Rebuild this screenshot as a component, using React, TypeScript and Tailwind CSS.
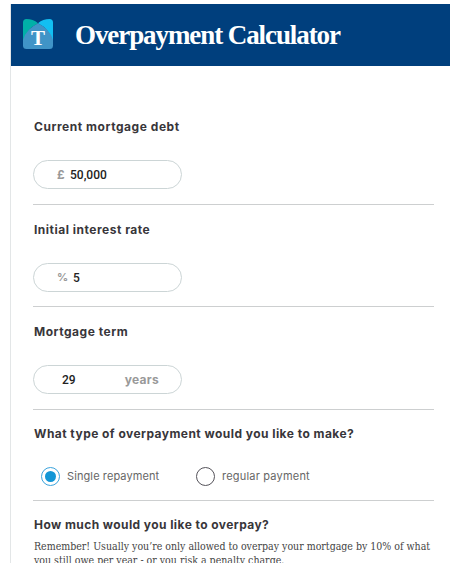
import React from "react";

function Heading({ children, className = "" }: { children: React.ReactNode; className?: string }) {
  return (
    <h2 className={`ml-px whitespace-nowrap font-['Inter',sans-serif] text-[12px] font-bold leading-[18px] text-[#38363a] ${className}`}>
      {children}
    </h2>
  );
}

function Pill({ children }: { children: React.ReactNode }) {
  return (
    <div className="flex h-[29px] w-[149px] items-center rounded-full border border-[#ccd5d6] font-['Roboto',sans-serif] text-[12px] font-medium leading-none text-[#222]">
      {children}
    </div>
  );
}

function Logo() {
  return (
    <svg width="30" height="30" viewBox="0 0 30 30" className="mb-[3px] shrink-0">
      <path d="M0 3.5Q0 0 3.5 0Q10 0 15 4.2Q3 10 0 24Z" fill="#00b0a8" />
      <path d="M30 3.5Q30 0 26.5 0Q20 0 15 4.2Q27 10 30 24Z" fill="#12bff2" />
      <path d="M15 4.2Q27 10 30 21V26.5Q30 30 26.5 30H3.5Q0 30 0 26.5V21Q3 10 15 4.2Z" fill="#4094c7" />
      <text x="15" y="26" textAnchor="middle" fontFamily="Liberation Serif, serif" fontWeight="700" fontSize="21" fill="#fff">T</text>
    </svg>
  );
}

export default function App() {
  return (
    <div className="h-[563px] w-[450px] overflow-hidden bg-white pl-[10px] pt-1">
      <div className="h-full border-l border-[#e3e6e7]">
        <header className="flex h-[62px] items-center bg-[#003f7d] pl-3">
          <Logo />
          <h1 className="ml-[22px] whitespace-nowrap font-['Liberation_Serif',serif] text-[27px] font-bold leading-[30px] tracking-[-1.08px] text-white">
            Overpayment Calculator
          </h1>
        </header>
        <main className="ml-[22px] w-[401px]">
          <section className="h-[139px] border-b border-[#cdcfd0] pt-[52px]">
            <Heading className="tracking-[0.54px]">Current mortgage debt</Heading>
            <div className="mt-[24px]">
              <Pill>
                <span className="ml-[23px] w-[13px] font-['Inter',sans-serif] text-[12px] font-bold text-[#999]">£</span>
                <span>50,000</span>
              </Pill>
            </div>
          </section>
          <section className="h-[102px] border-b border-[#cdcfd0] pt-[16px]">
            <Heading className="tracking-[0.5px]">Initial interest rate</Heading>
            <div className="mt-[24px]">
              <Pill>
                <span className="ml-[23px] w-[16px] font-['Inter',sans-serif] text-[11px] font-bold text-[#999]">%</span>
                <span>5</span>
              </Pill>
            </div>
          </section>
          <section className="h-[103px] border-b border-[#cdcfd0] pt-[16px]">
            <Heading className="tracking-[0.52px]">Mortgage term</Heading>
            <div className="mt-[24px]">
              <Pill>
                <span className="ml-[28px]">29</span>
                <span className="ml-auto mr-[22px] font-['Inter',sans-serif] font-bold tracking-[0.3px] text-[#999]">years</span>
              </Pill>
            </div>
          </section>
          <section className="h-[91px] border-b border-[#cdcfd0] pt-[15px]">
            <Heading className="tracking-[0.45px]">What type of overpayment would you like to make?</Heading>
            <div className="mt-[23px] flex h-5 items-center pl-[8px] font-['Inter',sans-serif] text-[11px] text-[#666]">
              <label className="flex w-[155px] items-center gap-[7px]">
                <span className="flex size-[19px] shrink-0 items-center justify-center rounded-full border border-[#3ba3dc]">
                  <span className="size-[11px] rounded-full bg-[#1296d6]" />
                </span>
                <span className="whitespace-nowrap tracking-[0.1px]">Single repayment</span>
              </label>
              <label className="flex items-center gap-[7px]">
                <span className="size-[19px] shrink-0 rounded-full border border-[#55535a]" />
                <span className="whitespace-nowrap tracking-[0.2px]">regular payment</span>
              </label>
            </div>
          </section>
          <section className="pt-[15px]">
            <Heading className="tracking-[0.42px]">How much would you like to overpay?</Heading>
            <p className="ml-px mt-[5px] whitespace-nowrap font-['DejaVu_Serif_Condensed','DejaVu_Serif',serif] text-[10.5px] leading-[14px] text-[#444]">
              Remember! Usually you’re only allowed to overpay your mortgage by 10% of what
              <br />
              you still owe per year - or you risk a penalty charge.
            </p>
          </section>
        </main>
      </div>
    </div>
  );
}
